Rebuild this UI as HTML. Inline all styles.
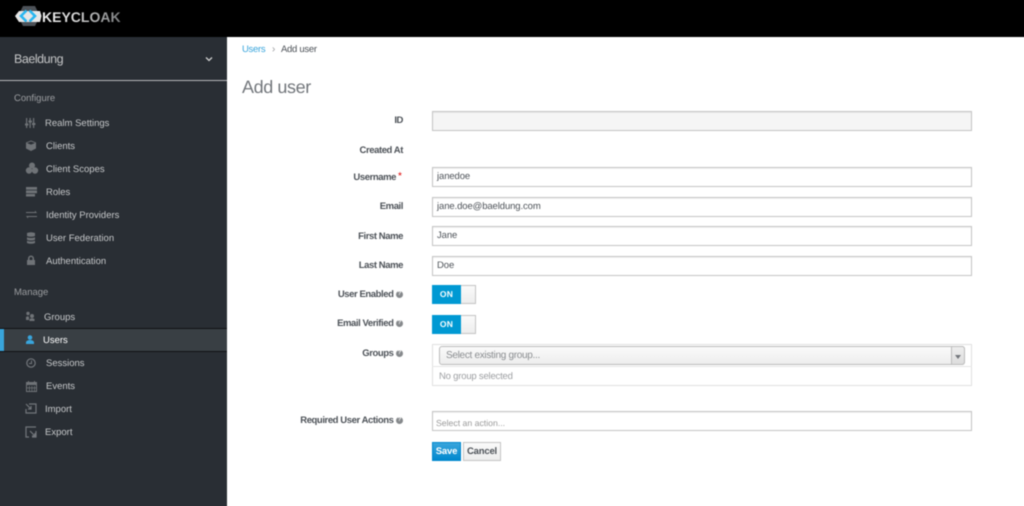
<!DOCTYPE html>
<html><head><meta charset="utf-8"><style>
html,body{margin:0;padding:0;width:1024px;height:506px;overflow:hidden;background:#fff}
body{font-family:"Liberation Sans",sans-serif;position:relative;text-rendering:geometricPrecision}
#w{position:absolute;left:-10px;top:-10px;width:1044px;height:526px;filter:blur(.4px);background:#fff}
#n{position:absolute;left:10px;top:10px;width:1024px;height:506px}
.a{position:absolute;white-space:nowrap}
.t{position:absolute;white-space:nowrap;font-size:9.5px;line-height:14px;margin-top:.5px;color:#c6c8ca}
.l{position:absolute;right:621px;white-space:nowrap;font-size:9.5px;line-height:14px;font-weight:bold;letter-spacing:-.42px;color:#4d5258;text-align:right}
.i{position:absolute;left:432px;width:540px;height:20px;box-sizing:border-box;border:1px solid #c4c4c4;background:#fff;font-size:9.5px;line-height:18px;padding-left:4px;letter-spacing:-.1px;color:#4d5258;box-shadow:inset 0 1px 1px rgba(0,0,0,.06)}
.h{display:inline-block;width:7px;height:7px;border-radius:50%;background:#85888b;margin-left:2.5px;margin-top:2.5px;vertical-align:top;font-size:6px;line-height:7px;text-align:center;color:#fff;letter-spacing:0;font-style:normal}
.tg{position:absolute;left:432px;width:44px;height:19px;box-sizing:border-box;border:1px solid #c4c4c4;background:linear-gradient(#fafafa,#ededed)}
.tg b{position:absolute;left:-1px;top:-1px;width:29px;height:19px;background:#0099d3;color:#fff;font-size:8.5px;line-height:19px;text-align:center;letter-spacing:.2px}
svg{position:absolute;left:0;top:0}
</style></head><body><div id="w"><div id="n">
<div class="a" style="left:-10px;top:-10px;width:1044px;height:47px;background:#000"></div>
<div class="a" style="left:-10px;top:37px;width:237px;height:479px;background:#292e34"></div>
<div class="a" style="left:-10px;top:80px;width:237px;height:1px;background:#b5b7b9"></div>
<div class="a" style="left:-10px;top:328px;width:237px;height:24px;background:#393f44;border-top:1px solid #101214;border-bottom:1px solid #101214;box-sizing:border-box"></div>
<div class="a" style="left:-10px;top:329px;width:14px;height:22px;background:#39a5dc"></div>

<svg width="230" height="506" viewBox="0 0 230 506">
<polygon points="18,16 23,6 35,6 40,16 35,26 23,26" fill="#4d5258"/>
<polygon points="15,16 19,11 40,11 41.5,16 40,22 19,22" fill="#e6e6e6"/>
<path d="M26.5,10.5 L21,16 L26.5,21.5 M29.5,10.5 L35,16 L29.5,21.5" stroke="#29b6f0" stroke-width="2.6" fill="none"/>
<path d="M206,57.5 L209,60.5 L212,57.5" stroke="#d1d1d1" stroke-width="1.3" fill="none"/>
<g fill="#6f7377" stroke="none">
<path d="M26,118h1.2v10h-1.2zM29.5,118h1.2v10h-1.2zM33,118h1.2v10h-1.2z"/><path d="M25,123.5h3.4v2h-3.4zM28.5,120.5h3.4v2h-3.4zM32,123h3.4v2h-3.4z"/>
<path d="M31,140.5l5,2v6l-5,2.5l-5,-2.5v-6zM27,143l4,1.6l4,-1.6l-4,-1.5z" fill-rule="evenodd"/>
<circle cx="32" cy="165.5" r="3"/><circle cx="29" cy="170.5" r="3.2"/><circle cx="35" cy="170.5" r="3.2"/>
<path d="M26,187h11v2.8h-11zM26,190.5h11v2.8h-11zM26,194h9v2.5h-9z"/>
<path d="M26,212h9v-1.5l2,2.5h-11zM26,216h11v1h-9v1.5l-2,-2.5z"/>
<path d="M27,233q4,-1.5 8,0v3q-4,1.5 -8,0zM27,237.2q4,1.5 8,0v2.5q-4,1.5 -8,0zM27,240.8q4,1.5 8,0v2.2q-4,1.5 -8,0z"/>
<path d="M28,260v-1.5a3,3 0 0 1 6,0v1.5h1v5h-8v-5zM29.5,260h3v-1.5a1.5,1.5 0 0 0 -3,0z" fill-rule="evenodd"/>
<circle cx="28" cy="313.5" r="1.7"/><path d="M26,320v-3q2,-1.5 3,0v3z"/><circle cx="32" cy="316" r="2"/><path d="M29.5,321v-2q2.5,-1.5 5,0v2z"/>
<path d="M26,382h11v10h-11zM27,385v6h9v-6z" fill-rule="evenodd"/><path d="M28,381h1v2h-1zM34,381h1v2h-1zM29,386h.8v5h-.8zM31.5,386h.8v5h-.8zM34,386h.8v5h-.8zM27,387.5h9v.8h-9z"/>
</g>
<g fill="#39a5dc"><circle cx="30" cy="337.5" r="2.3"/><path d="M26,344v-2q1,-2 4,-2t4,2v2z"/></g>
<circle cx="31" cy="363" r="4.2" fill="none" stroke="#72767b" stroke-width="1.2"/><path d="M31.5,360.5V363.5H29" fill="none" stroke="#72767b"/>
<g fill="none" stroke="#72767b" stroke-width="1.2"><path d="M29,404h7v9h-10v-4"/><path d="M26,404l5,5m0,-3v3h-3"/><path d="M36,427h-10v10h3M36,431v6h-4"/><path d="M30,431l5,5m-3,0h3v-3"/></g>
</svg>

<div class="a" style="left:42px;top:6px;font-size:14px;line-height:22px;font-weight:bold;background:linear-gradient(90deg,#f0f0f0 0%,#d8d8d8 40%,#7a7c7e 100%);-webkit-background-clip:text;background-clip:text;-webkit-text-fill-color:transparent">KEYCLOAK</div>

<div class="a" style="left:14px;top:50px;font-size:12.5px;line-height:18px;letter-spacing:-.47px;color:#c4c5c6">Baeldung</div>
<div class="t" style="left:14px;top:91px;color:#9c9ea1">Configure</div>
<div class="t" style="left:45px;top:116px">Realm Settings</div>
<div class="t" style="left:46px;top:139px">Clients</div>
<div class="t" style="left:46px;top:162px">Client Scopes</div>
<div class="t" style="left:46px;top:185px">Roles</div>
<div class="t" style="left:46px;top:208px">Identity Providers</div>
<div class="t" style="left:46px;top:231px">User Federation</div>
<div class="t" style="left:46px;top:254px">Authentication</div>
<div class="t" style="left:14px;top:285px;color:#9c9ea1">Manage</div>
<div class="t" style="left:44px;top:310px">Groups</div>
<div class="t" style="left:43px;top:333px;color:#fff">Users</div>
<div class="t" style="left:46px;top:356px">Sessions</div>
<div class="t" style="left:46px;top:379px">Events</div>
<div class="t" style="left:45px;top:402px">Import</div>
<div class="t" style="left:45px;top:425px">Export</div>

<div class="a" style="left:242px;top:43px;font-size:9.5px;line-height:14px;letter-spacing:-.3px;color:#39a5dc">Users</div>
<div class="a" style="left:272px;top:43px;font-size:10px;line-height:14px;color:#9c9ea1">›</div>
<div class="a" style="left:281px;top:43px;font-size:9.5px;line-height:14px;letter-spacing:-.28px;color:#4d5258">Add user</div>
<div class="a" style="left:242px;top:76px;font-size:18px;line-height:22px;letter-spacing:-.4px;color:#72767b">Add user</div>

<div class="l" style="top:114px">ID</div>
<div class="l" style="top:144px">Created At</div>
<div class="l" style="top:171px;right:628px">Username</div><div class="a" style="left:398px;top:170px;font-size:10px;line-height:14px;color:#d00">*</div>
<div class="l" style="top:200px">Email</div>
<div class="l" style="top:230px">First Name</div>
<div class="l" style="top:259px">Last Name</div>
<div class="l" style="top:288px">User Enabled<i class="h">?</i></div>
<div class="l" style="top:317px">Email Verified<i class="h">?</i></div>
<div class="l" style="top:347px">Groups<i class="h">?</i></div>
<div class="l" style="top:414px">Required User Actions<i class="h">?</i></div>

<div class="i" style="top:111px;background:#f5f5f5"></div>
<div class="i" style="top:167px">janedoe</div>
<div class="i" style="top:197px">jane.doe@baeldung.com</div>
<div class="i" style="top:226px">Jane</div>
<div class="i" style="top:256px">Doe</div>
<div class="tg" style="top:285px"><b>ON</b></div>
<div class="tg" style="top:315px"><b>ON</b></div>

<div class="a" style="left:432px;top:344px;width:540px;height:42px;box-sizing:border-box;border:1px solid #e0e0e0"></div>
<div class="a" style="left:432px;top:366px;width:540px;height:1px;background:#e6e6e6"></div>
<div class="a" style="left:439px;top:346px;width:526px;height:19px;box-sizing:border-box;border:1px solid #bbb;border-radius:3px;background:linear-gradient(#fafafa,#ededed);font-size:10px;line-height:18px;padding-left:6px;letter-spacing:-.3px;color:#8a8d90">Select existing group...</div>
<div class="a" style="left:951px;top:346px;width:14px;height:19px;box-sizing:border-box;border:1px solid #bbb;border-radius:0 3px 3px 0;background:linear-gradient(#eee,#ddd)"></div>
<div class="a" style="left:955px;top:355px;width:0;height:0;border-left:3px solid transparent;border-right:3px solid transparent;border-top:4px solid #72767b"></div>
<div class="a" style="left:439px;top:370px;font-size:9.5px;line-height:14px;letter-spacing:-.2px;color:#9c9ea1">No group selected</div>

<div class="i" style="top:411px;color:#999;font-size:8.7px;padding-left:3px;letter-spacing:0;line-height:23px">Select an action...</div>
<div class="a" style="left:432px;top:442px;width:29px;height:19px;box-sizing:border-box;border:1px solid #0088ce;background:linear-gradient(#39a5dc,#0088ce);color:#fff;font-size:9.5px;font-weight:bold;letter-spacing:-.2px;line-height:17px;text-align:center">Save</div>
<div class="a" style="left:463px;top:442px;width:38px;height:19px;box-sizing:border-box;border:1px solid #c4c4c4;background:linear-gradient(#fafafa,#ededed);color:#4d5258;font-size:9.5px;font-weight:bold;letter-spacing:-.2px;line-height:17px;text-align:center">Cancel</div>
</div></div></body></html>
